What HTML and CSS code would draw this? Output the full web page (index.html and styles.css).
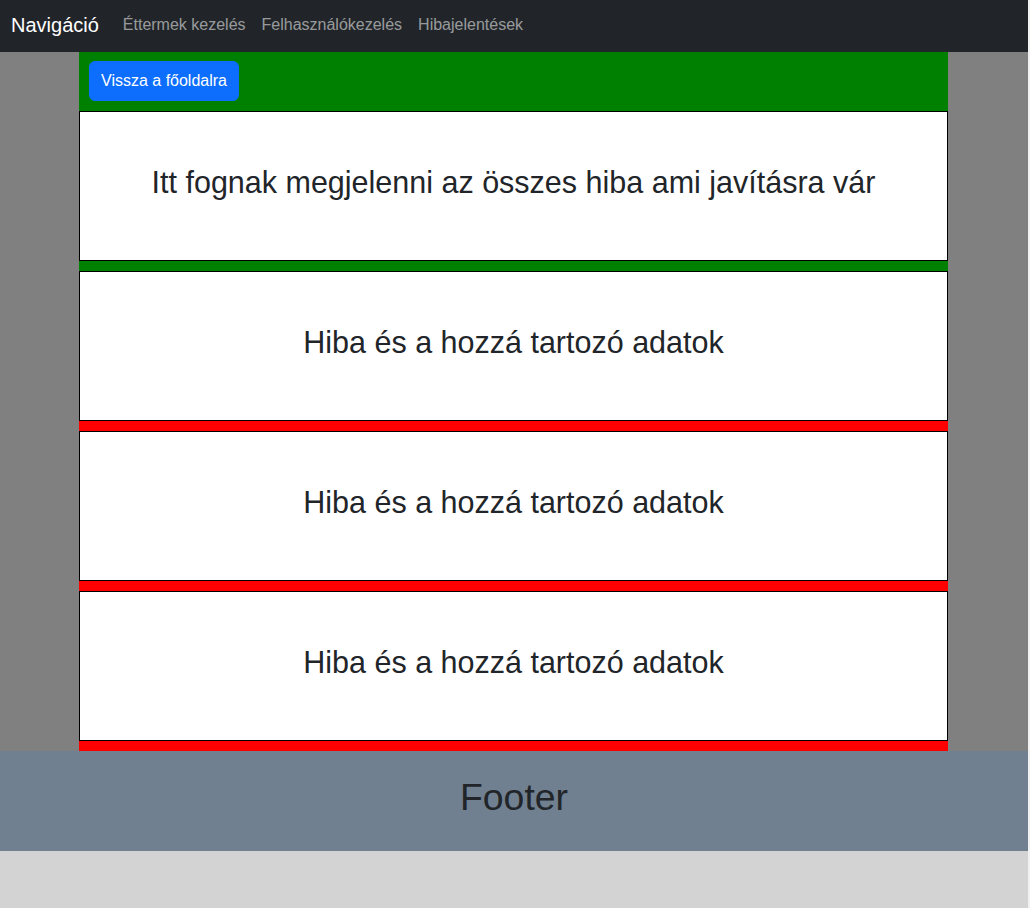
FILE: index.html
```html
<!DOCTYPE html>
<html lang="hu">
<head>
<meta charset="utf-8">
<title>Hibajelentések</title>
<link rel="stylesheet" href="styles.css">
</head>
<body>
<div class="page">
  <nav class="navbar">
    <a class="brand" href="#">Navigáció</a>
    <ul class="nav">
      <li><a class="nav-link" href="#">Éttermek kezelés</a></li>
      <li><a class="nav-link" href="#">Felhasználókezelés</a></li>
      <li><a class="nav-link" href="#">Hibajelentések</a></li>
    </ul>
  </nav>
  <main class="main">
    <div class="container">
      <div class="top">
        <button class="btn" type="button">Vissza a főoldalra</button>
      </div>
      <div class="item item-green">
        <div class="box"><h2 class="title">Itt fognak megjelenni az összes hiba ami javításra vár</h2></div>
      </div>
      <div class="item item-red">
        <div class="box"><h2 class="title">Hiba és a hozzá tartozó adatok</h2></div>
      </div>
      <div class="item item-red">
        <div class="box"><h2 class="title">Hiba és a hozzá tartozó adatok</h2></div>
      </div>
      <div class="item item-red">
        <div class="box"><h2 class="title">Hiba és a hozzá tartozó adatok</h2></div>
      </div>
    </div>
  </main>
  <footer class="footer">
    <h1 class="footer-title">Footer</h1>
  </footer>
</div>
</body>
</html>
```
FILE: styles.css
```css
html {
  background: #f2f2f2;
}
body {
  margin: 0;
  font-family: "Liberation Sans", Arial, sans-serif;
  color: #212529;
}
.page {
  width: 1028px;
  min-height: 908px;
  background: #d3d3d3;
}
.navbar {
  height: 52px;
  box-sizing: border-box;
  background: #212529;
  display: flex;
  align-items: center;
  padding: 0 0 3px 11px;
}
.brand {
  color: #fff;
  text-decoration: none;
  font-size: 20px;
  line-height: 30px;
  margin-right: 16px;
}
.nav {
  display: flex;
  list-style: none;
  margin: 0;
  padding: 0;
}
.nav-link {
  display: block;
  padding: 8px 8px;
  font-size: 16px;
  line-height: 24px;
  color: rgba(255, 255, 255, 0.55);
  text-decoration: none;
}
.main {
  background: #808080;
  padding-right: 1px;
}
.container {
  width: 869px;
  margin: 0 auto;
  display: flex;
  flex-direction: column;
}
.top {
  background: #008000;
  height: 59px;
  box-sizing: border-box;
  padding: 9px 10px 0;
}
.btn {
  font-family: inherit;
  font-size: 16px;
  line-height: 24px;
  color: #fff;
  background: #0d6efd;
  border: 1px solid #0d6efd;
  border-radius: 6px;
  padding: 7px 11px;
  width: 150px;
  height: 40px;
}
.item {
  padding-bottom: 10px;
}
.item-green {
  background: #008000;
}
.item-red {
  background: #ff0000;
}
.box {
  height: 150px;
  box-sizing: border-box;
  border: 1px solid #000;
  background: #fff;
  display: flex;
  align-items: center;
  justify-content: center;
}
.title {
  margin: 0 0 8px;
  font-size: 30.5px;
  line-height: 1.2;
  font-weight: 500;
  text-align: center;
}
.footer {
  height: 100px;
  background: #708090;
  display: flex;
  align-items: center;
  justify-content: center;
}
.footer-title {
  margin: 0 0 8px;
  font-size: 37.4px;
  line-height: 1.2;
  font-weight: 500;
}
```
